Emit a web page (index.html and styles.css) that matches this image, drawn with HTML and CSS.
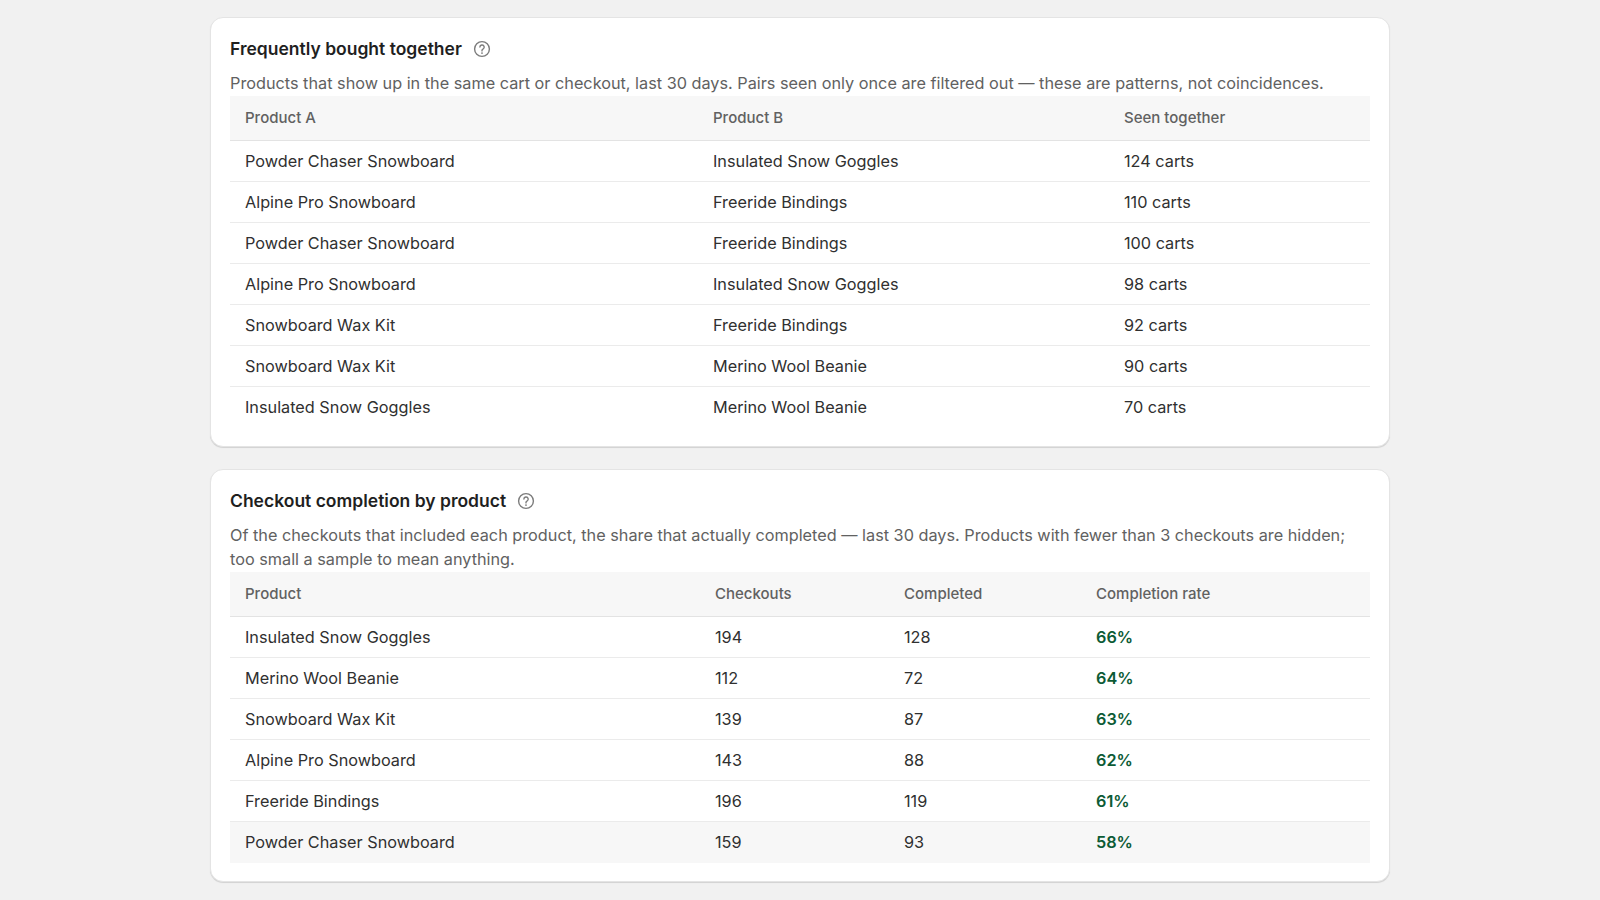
FILE: index.html
```html
<!DOCTYPE html>
<html lang="en">
<head>
<meta charset="utf-8">
<title>Product insights</title>
<link rel="stylesheet" href="styles.css">
</head>
<body>
<main class="page">
  <section class="card">
    <div class="card-head">
      <h2 class="card-title">Frequently bought together</h2>
      <span class="help" aria-label="Help">
        <svg viewBox="0 0 20 20" width="20" height="20"><circle cx="10" cy="10" r="7.4" fill="none" stroke="#7c7c7c" stroke-width="1.4"/><path d="M7.9 8.1a2.15 2.15 0 1 1 3.1 1.95c-.6.3-1 .8-1 1.45v.4" fill="none" stroke="#7c7c7c" stroke-width="1.4" stroke-linecap="round"/><circle cx="10" cy="14.1" r=".9" fill="#7c7c7c"/></svg>
      </span>
    </div>
    <p class="card-desc">Products that show up in the same cart or checkout, last 30 days. Pairs seen only once are filtered out — these are patterns, not coincidences.</p>
    <table class="data-table">
      <colgroup><col style="width:468px"><col style="width:411px"><col></colgroup>
      <thead>
        <tr><th>Product A</th><th>Product B</th><th>Seen together</th></tr>
      </thead>
      <tbody>
        <tr><td>Powder Chaser Snowboard</td><td>Insulated Snow Goggles</td><td>124 carts</td></tr>
        <tr><td>Alpine Pro Snowboard</td><td>Freeride Bindings</td><td>110 carts</td></tr>
        <tr><td>Powder Chaser Snowboard</td><td>Freeride Bindings</td><td>100 carts</td></tr>
        <tr><td>Alpine Pro Snowboard</td><td>Insulated Snow Goggles</td><td>98 carts</td></tr>
        <tr><td>Snowboard Wax Kit</td><td>Freeride Bindings</td><td>92 carts</td></tr>
        <tr><td>Snowboard Wax Kit</td><td>Merino Wool Beanie</td><td>90 carts</td></tr>
        <tr><td>Insulated Snow Goggles</td><td>Merino Wool Beanie</td><td>70 carts</td></tr>
      </tbody>
    </table>
  </section>

  <section class="card">
    <div class="card-head">
      <h2 class="card-title">Checkout completion by product</h2>
      <span class="help" aria-label="Help">
        <svg viewBox="0 0 20 20" width="20" height="20"><circle cx="10" cy="10" r="7.4" fill="none" stroke="#7c7c7c" stroke-width="1.4"/><path d="M7.9 8.1a2.15 2.15 0 1 1 3.1 1.95c-.6.3-1 .8-1 1.45v.4" fill="none" stroke="#7c7c7c" stroke-width="1.4" stroke-linecap="round"/><circle cx="10" cy="14.1" r=".9" fill="#7c7c7c"/></svg>
      </span>
    </div>
    <p class="card-desc">Of the checkouts that included each product, the share that actually completed — last 30 days. Products with fewer than 3 checkouts are hidden; too small a sample to mean anything.</p>
    <table class="data-table">
      <colgroup><col style="width:470px"><col style="width:189px"><col style="width:192px"><col></colgroup>
      <thead>
        <tr><th>Product</th><th>Checkouts</th><th>Completed</th><th>Completion rate</th></tr>
      </thead>
      <tbody>
        <tr><td>Insulated Snow Goggles</td><td>194</td><td>128</td><td class="rate">66%</td></tr>
        <tr><td>Merino Wool Beanie</td><td>112</td><td>72</td><td class="rate">64%</td></tr>
        <tr><td>Snowboard Wax Kit</td><td>139</td><td>87</td><td class="rate">63%</td></tr>
        <tr><td>Alpine Pro Snowboard</td><td>143</td><td>88</td><td class="rate">62%</td></tr>
        <tr><td>Freeride Bindings</td><td>196</td><td>119</td><td class="rate">61%</td></tr>
        <tr class="hover"><td>Powder Chaser Snowboard</td><td>159</td><td>93</td><td class="rate">58%</td></tr>
      </tbody>
    </table>
  </section>
</main>
</body>
</html>
```

FILE: styles.css
```css
* { box-sizing: border-box; }

html, body {
  margin: 0;
  padding: 0;
  background: #f1f1f1;
}

body {
  font-family: Inter, "Noto Sans", "Liberation Sans", sans-serif;
  color: #303030;
  font-size: 16.25px;
}

.page {
  width: 1180px;
  margin: 0 auto;
  padding: 17px 0 20px;
  display: flex;
  flex-direction: column;
  gap: 22px;
}

.card {
  background: #ffffff;
  border: 1px solid #e4e4e4;
  border-radius: 13px;
  box-shadow: 0 1px 0 0 rgba(0, 0, 0, 0.09), 0 1px 2px rgba(0, 0, 0, 0.04);
  padding: 19px 19px 18px;
}

.card-head {
  display: flex;
  align-items: center;
  gap: 10px;
  height: 24px;
}

.card-title {
  margin: 0;
  font-size: 17.5px;
  font-weight: 600;
  color: #1f1f1f;
  line-height: 24px;
}

.help {
  display: inline-flex;
  width: 20px;
  height: 20px;
}

.card-desc {
  margin: 10px 0 0;
  font-size: 16.25px;
  line-height: 24.5px;
  color: #616161;
}

.data-table {
  width: 100%;
  table-layout: fixed;
  border-collapse: collapse;
  font-size: 16.25px;
}

.data-table th {
  background: #f7f7f7;
  color: #616161;
  font-weight: 500;
  font-size: 15px;
  text-align: left;
  height: 45px;
  padding: 0 15px;
  border-bottom: 1px solid #e3e3e3;
}

.data-table td {
  height: 41px;
  padding: 0 15px;
  color: #303030;
  border-bottom: 1px solid #ebebeb;
}

.data-table tbody tr:last-child td {
  border-bottom: none;
}

.data-table tr.hover td {
  background: #f7f7f7;
}

.rate {
  color: #0c5b35 !important;
  font-weight: 600;
}
```
